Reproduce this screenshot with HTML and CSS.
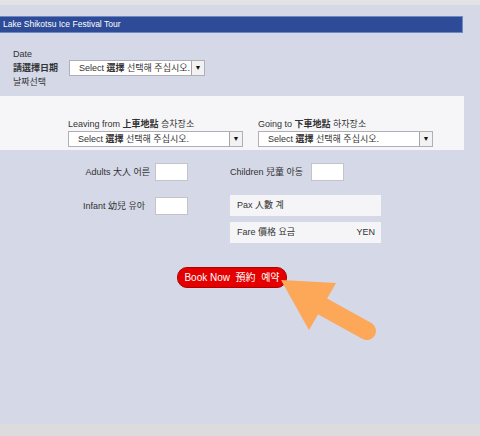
FILE: index.html
```html
<!DOCTYPE html>
<html lang="en">
  <head>
    <title>Lake Shikotsu Ice Festival Tour</title>
    <meta charset="UTF-8">
    <link rel="stylesheet" href="styles.css">
  </head>
  <body>
    <div class="top-strip"></div>
    <div class="page">
      <div class="header">Lake Shikotsu Ice Festival Tour</div>

      <!--Date choice-->
      <div class="date-row">
        <div class="date-label">
          <span>Date</span>
          <span class="strong">請選擇日期</span>
          <span>날짜선택</span>
        </div>
        <div class="select select-date">
          <span class="select-text">Select <b>選擇</b> 선택해 주십시오.</span>
          <span class="select-arrow">&#9660;</span>
        </div>
      </div>

      <!--Pick up / drop off-->
      <div class="place-panel">
        <div class="place">
          <span class="place-label">Leaving from <b>上車地點</b> 승차장소</span>
          <div class="select select-place">
            <span class="select-text">Select <b>選擇</b> 선택해 주십시오.</span>
            <span class="select-arrow">&#9660;</span>
          </div>
        </div>
        <div class="place">
          <span class="place-label">Going to <b>下車地點</b> 하자장소</span>
          <div class="select select-place">
            <span class="select-text">Select <b>選擇</b> 선택해 주십시오.</span>
            <span class="select-arrow">&#9660;</span>
          </div>
        </div>
      </div>

      <!--Passengers-->
      <div class="pax-grid">
        <span class="pax-label">Adults 大人 어른</span>
        <input type="text" class="pax-input">
        <div class="right-cell">
          <span class="pax-label">Children 兒童 아동</span>
          <input type="text" class="pax-input">
        </div>

        <span class="pax-label pax-label-low">Infant 幼兒 유아</span>
        <input type="text" class="pax-input pax-input-low">
        <div class="totals">
          <div class="total-box">Pax 人數 계</div>
          <div class="total-box">Fare 價格 요금 <span class="yen">YEN</span></div>
        </div>
      </div>

      <div class="button-row">
        <span class="book-button">Book Now &nbsp;預約 &nbsp;예약</span>
      </div>

      <!--Pointer over the button-->
      <svg class="pointer" width="120" height="80" viewBox="270 270 120 80">
        <polygon points="281,280 336,283 309,330" fill="#fda758"/>
        <line x1="320" y1="305" x2="367" y2="331" stroke="#fda758" stroke-width="18" stroke-linecap="round"/>
      </svg>
    </div>
    <div class="bottom-strip"></div>
  </body>
</html>
```

FILE: styles.css
```css
html, body {
	margin: 0;
	height: 100%;
}
body {
	background-color: #d4d8e7;
	font-family: "Liberation Sans", "Noto Sans CJK KR", sans-serif;
	font-size: 9px;
	color: #333333;
	display: flex;
	flex-direction: column;
	overflow: hidden;
}
b, .strong {font-weight: bold;}
.top-strip {
	height: 5px;
	background-color: #e3e3e6;
}
.bottom-strip {
	height: 12px;
	background-color: #dcdcde;
}
.page {
	flex: 1;
	position: relative;
	padding-top: 11px;
}
.header {
	width: 459px;
	height: 15px;
	line-height: 15px;
	padding-left: 3px;
	background-color: #2d4b97;
	border: 1px solid #7088c6;
	border-left: none;
	color: white;
	font-size: 8.5px;
}
.date-row {
	display: flex;
	align-items: center;
	margin-top: 14px;
	padding-left: 13px;
}
.date-label {
	display: flex;
	flex-direction: column;
	line-height: 14px;
	width: 56px;
}
.select {
	display: flex;
	align-items: stretch;
	height: 14px;
	background: white;
	border: 1px solid #b0b0b4;
	overflow: hidden;
}
.select-text {
	flex: 1;
	padding-left: 9px;
	line-height: 14px;
	white-space: nowrap;
	overflow: hidden;
}
.select-arrow {
	width: 12px;
	border-left: 1px solid #a6a6aa;
	background: #f2f2f2;
	text-align: center;
	font-size: 7px;
	line-height: 14px;
	color: #111;
}
.select-date {width: 134px;}
.select-place {width: 173px;}
.place-panel {
	margin-top: 7px;
	width: 464px;
	height: 54px;
	box-sizing: border-box;
	background-color: #f6f6f8;
	display: flex;
	gap: 15px;
	padding: 22px 0 0 68px;
}
.place {
	display: flex;
	flex-direction: column;
	gap: 1px;
}
.place-label {
	line-height: 12px;
	white-space: nowrap;
}
.pax-grid {
	display: grid;
	grid-template-columns: 150px 33px 32px 151px;
	column-gap: 5px;
	row-gap: 14px;
	align-items: start;
	margin-top: 13px;
}
.pax-label {
	text-align: right;
	line-height: 18px;
	white-space: nowrap;
}
.pax-label-low {
	padding-top: 2px;
	padding-right: 5px;
}
.pax-input {
	width: 33px;
	height: 18px;
	box-sizing: border-box;
	border: 1px solid #c4c4c8;
	background: white;
	padding: 0;
}
.pax-input-low {margin-top: 2px;}
.right-cell {
	grid-column: 4;
	display: flex;
	gap: 10px;
}
.right-cell .pax-label {width: 71px; text-align: left;}
.totals {
	grid-column: 4;
	display: flex;
	flex-direction: column;
	gap: 6px;
}
.total-box {
	height: 21px;
	line-height: 21px;
	background-color: #f5f5f7;
	padding: 0 6px 0 7px;
	display: flex;
}
.yen {margin-left: auto;}
.button-row {
	width: 464px;
	display: flex;
	justify-content: center;
	margin-top: 24px;
}
.book-button {
	background-color: #e40000;
	border: 1px solid #b00000;
	border-radius: 10px;
	color: white;
	font-size: 10px;
	height: 19px;
	line-height: 19px;
	padding: 0 6px;
	white-space: nowrap;
}
.pointer {
	position: absolute;
	left: 270px;
	top: 265px;
}
```
